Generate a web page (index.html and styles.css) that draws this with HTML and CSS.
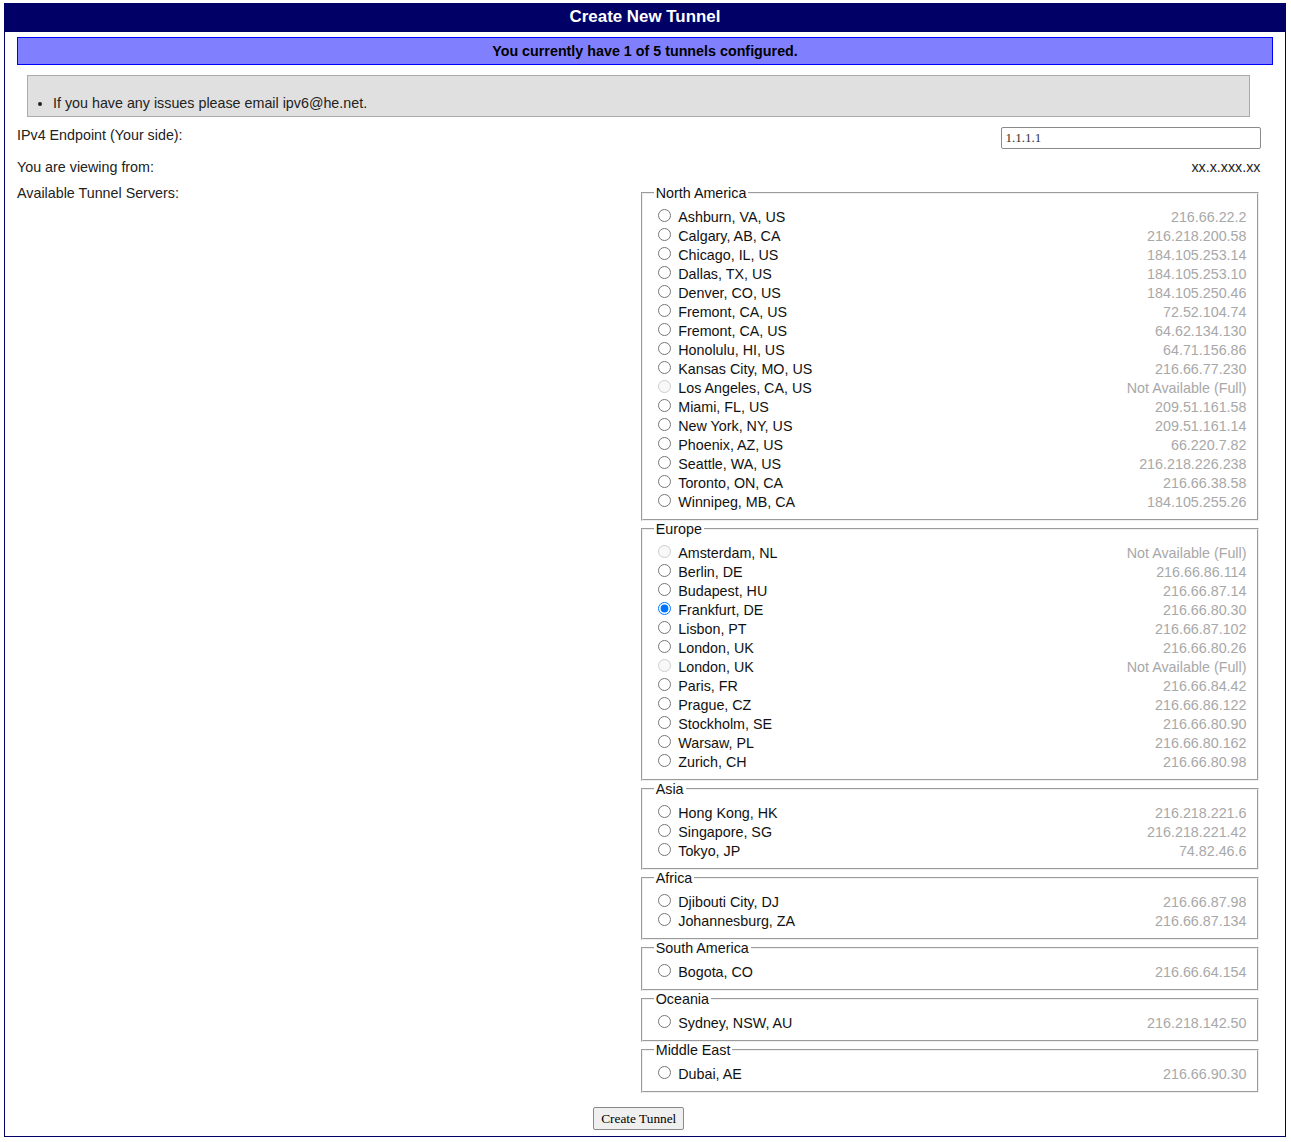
FILE: index.html
```html
<!DOCTYPE html>
<html>
<head>
<meta charset="utf-8">
<title>Create New Tunnel</title>
<link rel="stylesheet" href="styles.css">
</head>
<body>
<div class="page">
  <div class="header">Create New Tunnel</div>
  <div class="notice">You currently have 1 of 5 tunnels configured.</div>
  <div class="info">
    <ul>
      <li>If you have any issues please email ipv6@he.net.</li>
    </ul>
  </div>
  <form class="grid">
    <div class="lbl">IPv4 Endpoint (Your side):</div>
    <div class="val"><input class="ep" type="text" value="1.1.1.1"></div>
    <div class="lbl">You are viewing from:</div>
    <div class="val">xx.x.xxx.xx</div>
    <div class="lbl">Available Tunnel Servers:</div>
    <div class="servers">
      <fieldset>
        <legend>North America</legend>
        <div class="row"><label><input type="radio" name="ts">Ashburn, VA, US</label><span class="ip">216.66.22.2</span></div>
        <div class="row"><label><input type="radio" name="ts">Calgary, AB, CA</label><span class="ip">216.218.200.58</span></div>
        <div class="row"><label><input type="radio" name="ts">Chicago, IL, US</label><span class="ip">184.105.253.14</span></div>
        <div class="row"><label><input type="radio" name="ts">Dallas, TX, US</label><span class="ip">184.105.253.10</span></div>
        <div class="row"><label><input type="radio" name="ts">Denver, CO, US</label><span class="ip">184.105.250.46</span></div>
        <div class="row"><label><input type="radio" name="ts">Fremont, CA, US</label><span class="ip">72.52.104.74</span></div>
        <div class="row"><label><input type="radio" name="ts">Fremont, CA, US</label><span class="ip">64.62.134.130</span></div>
        <div class="row"><label><input type="radio" name="ts">Honolulu, HI, US</label><span class="ip">64.71.156.86</span></div>
        <div class="row"><label><input type="radio" name="ts">Kansas City, MO, US</label><span class="ip">216.66.77.230</span></div>
        <div class="row"><label><input type="radio" name="ts" disabled>Los Angeles, CA, US</label><span class="ip">Not Available (Full)</span></div>
        <div class="row"><label><input type="radio" name="ts">Miami, FL, US</label><span class="ip">209.51.161.58</span></div>
        <div class="row"><label><input type="radio" name="ts">New York, NY, US</label><span class="ip">209.51.161.14</span></div>
        <div class="row"><label><input type="radio" name="ts">Phoenix, AZ, US</label><span class="ip">66.220.7.82</span></div>
        <div class="row"><label><input type="radio" name="ts">Seattle, WA, US</label><span class="ip">216.218.226.238</span></div>
        <div class="row"><label><input type="radio" name="ts">Toronto, ON, CA</label><span class="ip">216.66.38.58</span></div>
        <div class="row"><label><input type="radio" name="ts">Winnipeg, MB, CA</label><span class="ip">184.105.255.26</span></div>
      </fieldset>
      <fieldset>
        <legend>Europe</legend>
        <div class="row"><label><input type="radio" name="ts" disabled>Amsterdam, NL</label><span class="ip">Not Available (Full)</span></div>
        <div class="row"><label><input type="radio" name="ts">Berlin, DE</label><span class="ip">216.66.86.114</span></div>
        <div class="row"><label><input type="radio" name="ts">Budapest, HU</label><span class="ip">216.66.87.14</span></div>
        <div class="row"><label><input type="radio" name="ts" checked>Frankfurt, DE</label><span class="ip">216.66.80.30</span></div>
        <div class="row"><label><input type="radio" name="ts">Lisbon, PT</label><span class="ip">216.66.87.102</span></div>
        <div class="row"><label><input type="radio" name="ts">London, UK</label><span class="ip">216.66.80.26</span></div>
        <div class="row"><label><input type="radio" name="ts" disabled>London, UK</label><span class="ip">Not Available (Full)</span></div>
        <div class="row"><label><input type="radio" name="ts">Paris, FR</label><span class="ip">216.66.84.42</span></div>
        <div class="row"><label><input type="radio" name="ts">Prague, CZ</label><span class="ip">216.66.86.122</span></div>
        <div class="row"><label><input type="radio" name="ts">Stockholm, SE</label><span class="ip">216.66.80.90</span></div>
        <div class="row"><label><input type="radio" name="ts">Warsaw, PL</label><span class="ip">216.66.80.162</span></div>
        <div class="row"><label><input type="radio" name="ts">Zurich, CH</label><span class="ip">216.66.80.98</span></div>
      </fieldset>
      <fieldset>
        <legend>Asia</legend>
        <div class="row"><label><input type="radio" name="ts">Hong Kong, HK</label><span class="ip">216.218.221.6</span></div>
        <div class="row"><label><input type="radio" name="ts">Singapore, SG</label><span class="ip">216.218.221.42</span></div>
        <div class="row"><label><input type="radio" name="ts">Tokyo, JP</label><span class="ip">74.82.46.6</span></div>
      </fieldset>
      <fieldset>
        <legend>Africa</legend>
        <div class="row"><label><input type="radio" name="ts">Djibouti City, DJ</label><span class="ip">216.66.87.98</span></div>
        <div class="row"><label><input type="radio" name="ts">Johannesburg, ZA</label><span class="ip">216.66.87.134</span></div>
      </fieldset>
      <fieldset>
        <legend>South America</legend>
        <div class="row"><label><input type="radio" name="ts">Bogota, CO</label><span class="ip">216.66.64.154</span></div>
      </fieldset>
      <fieldset>
        <legend>Oceania</legend>
        <div class="row"><label><input type="radio" name="ts">Sydney, NSW, AU</label><span class="ip">216.218.142.50</span></div>
      </fieldset>
      <fieldset>
        <legend>Middle East</legend>
        <div class="row"><label><input type="radio" name="ts">Dubai, AE</label><span class="ip">216.66.90.30</span></div>
      </fieldset>
    </div>
    <div class="submit"><button type="button" class="btn">Create Tunnel</button></div>
  </form>
</div>
</body>
</html>
```
FILE: styles.css
```css
html, body {
  background: #ffffff;
}
body {
  margin: 3px 5px 4px 4px;
  font-family: "Liberation Sans", Arial, sans-serif;
  font-size: 14.3px;
  color: #111;
}
.page {
  border: 1px solid #000066;
  padding-bottom: 6px;
}
.header {
  background: #000066;
  color: #ffffff;
  font-weight: bold;
  font-size: 16.9px;
  text-align: center;
  line-height: 24px;
  padding: 1px 0 3px;
}
.notice {
  margin: 5px 12px 0 12px;
  background: #8080ff;
  border: 1px solid #0000ff;
  font-weight: bold;
  text-align: center;
  line-height: 26px;
  color: #000;
}
.info {
  margin: 10px 35px 0 22px;
  background: #e0e0e0;
  border: 1px solid #aaaaaa;
  padding: 19px 0 5px;
  color: #222;
}
.info ul {
  margin: 0;
  padding-left: 25px;
  line-height: 16px;
}
.grid {
  margin: 10px 24.5px 0 12px;
  display: grid;
  grid-template-columns: 1fr 1fr;
  row-gap: 10px;
  align-items: start;
}
.lbl {
  line-height: 16px;
  color: #222;
}
.val {
  text-align: right;
  line-height: 16px;
  color: #222;
}
.ep {
  box-sizing: border-box;
  width: 260px;
  height: 22px;
  margin: 0;
  padding: 1px 4px;
  border: 1px solid #8a8a8a;
  border-radius: 2px;
  font-family: "Liberation Serif", "Times New Roman", serif;
  font-size: 13px;
  color: #333;
  vertical-align: top;
}
.servers fieldset {
  margin: 0 2px;
  padding: 5px 10px 9px 11px;
  font-size: 14.3px;
  min-width: 0;
}
.servers legend {
  padding: 0 2px;
  line-height: 16px;
  color: #111;
}
.row {
  display: flex;
  justify-content: space-between;
  align-items: center;
  height: 19px;
}
.row label {
  display: flex;
  align-items: center;
  line-height: 16px;
  padding-top: 2px;
  color: #111;
}
.row input {
  margin: -2px 7px 0 4.5px;
  width: 13px;
  height: 13px;
}
.ip {
  color: #a8a8a8;
  line-height: 16px;
  padding-top: 2px;
}
.submit {
  grid-column: 1 / span 2;
  text-align: center;
  margin-top: 4px;
}
.btn {
  font-family: "Liberation Serif", "Times New Roman", serif;
  font-size: 13.33px;
  padding: 1px 7px;
  height: 23px;
  border: 1px solid #8a8a8a;
  border-radius: 2px;
  background: #efefef;
  color: #000;
}
```
